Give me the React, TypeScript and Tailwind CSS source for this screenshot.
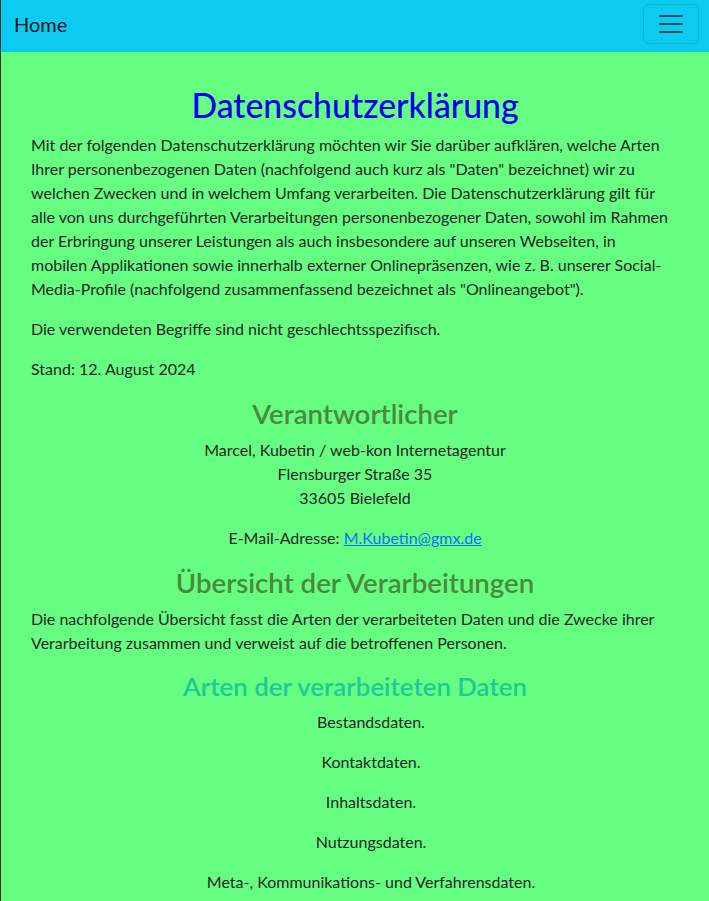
const arten = [
  'Bestandsdaten.',
  'Kontaktdaten.',
  'Inhaltsdaten.',
  'Nutzungsdaten.',
  'Meta-, Kommunikations- und Verfahrensdaten.',
];

function Navbar() {
  return (
    <nav className="flex h-[52px] items-center justify-between bg-[#0dcaf0] pb-[4px] pl-[13px] pr-[10px]">
      <a href="#" className="text-[20px] leading-[30px] text-black/90">
        Home
      </a>
      <button
        aria-label="Navigation umschalten"
        className="flex h-[40px] w-[56px] items-center justify-center rounded-[6px] border border-black/10"
      >
        <svg width="30" height="30" viewBox="0 0 30 30">
          <path
            d="M4 7h22M4 15h22M4 23h22"
            stroke="rgba(33,37,41,0.75)"
            strokeWidth="2"
            strokeLinecap="round"
            strokeMiterlimit="10"
          />
        </svg>
      </button>
    </nav>
  );
}

export default function App() {
  return (
    <div className="min-h-[901px] border-l border-[#1d3b22] bg-[#66fe80] font-['Lato','Liberation_Sans',sans-serif] text-[16px] leading-[24px] text-[#212529]">
      <Navbar />
      <main className="px-[30px] pt-[34px] pb-4">
        <h1 className="mb-2 text-center text-[33.8px] leading-[39px] font-medium text-[#0000f0]">
          Datenschutzerklärung
        </h1>
        <p className="mb-4">
          Mit der folgenden Datenschutzerklärung möchten wir Sie darüber aufklären, welche Arten Ihrer
          personenbezogenen Daten (nachfolgend auch kurz als "Daten" bezeichnet) wir zu welchen Zwecken und in
          welchem Umfang verarbeiten. Die Datenschutzerklärung gilt für alle von uns durchgeführten
          Verarbeitungen personenbezogener Daten, sowohl im Rahmen der Erbringung unserer Leistungen als auch
          insbesondere auf unseren Webseiten, in mobilen{'\u00A0'}Applikationen sowie innerhalb externer
          Onlinepräsenzen, wie z. B. unserer Social-Media-Profile (nachfolgend zusammenfassend bezeichnet als
          "Onlineangebot").
        </p>
        <p className="mb-4">Die verwendeten Begriffe sind nicht geschlechtsspezifisch.</p>
        <p className="mb-4">Stand: 12. August 2024</p>

        <h2 className="mb-2 text-center text-[27.6px] leading-[1.2] font-semibold text-[#4a8a3c]">
          Verantwortlicher
        </h2>
        <p className="mb-4 text-center">
          Marcel, Kubetin / web-kon Internetagentur
          <br />
          Flensburger Straße 35
          <br />
          33605 Bielefeld
        </p>
        <p className="mb-4 text-center">
          E-Mail-Adresse:{' '}
          <a href="mailto:M.Kubetin@gmx.de" className="text-[#0d6efd] underline">
            M.Kubetin@gmx.de
          </a>
        </p>

        <h2 className="mb-2 text-center text-[27.6px] leading-[1.2] font-semibold text-[#4a8a3c]">
          Übersicht der Verarbeitungen
        </h2>
        <p className="mb-4">
          Die nachfolgende Übersicht fasst die Arten der verarbeiteten Daten und die Zwecke ihrer Verarbeitung
          zusammen und verweist auf die betroffenen Personen.
        </p>

        <h3 className="mb-2 text-center text-[25.8px] leading-[1.2] font-semibold text-[#20c997]">
          Arten der verarbeiteten Daten
        </h3>
        <ul className="mb-4 list-none pl-8 text-center">
          {arten.map((a) => (
            <li key={a}>
              <p className="mb-4">{a}</p>
            </li>
          ))}
        </ul>
      </main>
    </div>
  );
}
